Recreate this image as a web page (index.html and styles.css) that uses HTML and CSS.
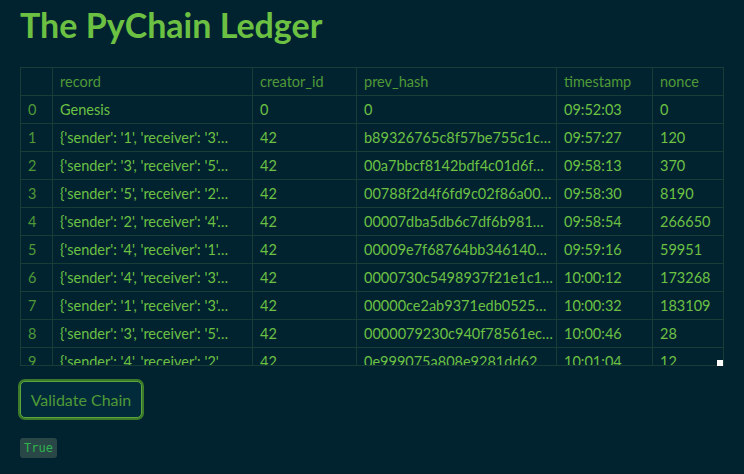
FILE: index.html
```
<!DOCTYPE html>
<html>
<head>
<meta charset="utf-8">
<link rel="stylesheet" href="styles.css">
</head>
<body>
<main class="main">
  <h1 class="title">The PyChain Ledger</h1>
  <div class="frame">
    <div class="scroller">
      <table class="grid">
        <colgroup>
          <col class="c-idx"><col class="c-rec"><col class="c-cre"><col class="c-hash"><col class="c-ts"><col class="c-non">
        </colgroup>
        <thead>
          <tr><th></th><th>record</th><th>creator_id</th><th>prev_hash</th><th>timestamp</th><th>nonce</th></tr>
        </thead>
        <tbody>
          <tr><td class="idx">0</td><td>Genesis</td><td>0</td><td>0</td><td>09:52:03</td><td>0</td></tr>
          <tr><td class="idx">1</td><td>{'sender': '1', 'receiver': '3'…</td><td>42</td><td>b89326765c8f57be755c1c…</td><td>09:57:27</td><td>120</td></tr>
          <tr><td class="idx">2</td><td>{'sender': '3', 'receiver': '5'…</td><td>42</td><td>00a7bbcf8142bdf4c01d6f…</td><td>09:58:13</td><td>370</td></tr>
          <tr><td class="idx">3</td><td>{'sender': '5', 'receiver': '2'…</td><td>42</td><td>00788f2d4f6fd9c02f86a00…</td><td>09:58:30</td><td>8190</td></tr>
          <tr><td class="idx">4</td><td>{'sender': '2', 'receiver': '4'…</td><td>42</td><td>00007dba5db6c7df6b981…</td><td>09:58:54</td><td>266650</td></tr>
          <tr><td class="idx">5</td><td>{'sender': '4', 'receiver': '1'…</td><td>42</td><td>00009e7f68764bb346140…</td><td>09:59:16</td><td>59951</td></tr>
          <tr><td class="idx">6</td><td>{'sender': '4', 'receiver': '3'…</td><td>42</td><td>0000730c5498937f21e1c1…</td><td>10:00:12</td><td>173268</td></tr>
          <tr><td class="idx">7</td><td>{'sender': '1', 'receiver': '3'…</td><td>42</td><td>00000ce2ab9371edb0525…</td><td>10:00:32</td><td>183109</td></tr>
          <tr><td class="idx">8</td><td>{'sender': '3', 'receiver': '5'…</td><td>42</td><td>0000079230c940f78561ec…</td><td>10:00:46</td><td>28</td></tr>
          <tr><td class="idx">9</td><td>{'sender': '4', 'receiver': '2'…</td><td>42</td><td>0e999075a808e9281dd62…</td><td>10:01:04</td><td>12</td></tr>
        </tbody>
      </table>
    </div>
    <span class="handle"></span>
  </div>
  <div class="actions">
    <button class="btn" type="button">Validate Chain</button>
  </div>
  <div class="result"><code class="badge">True</code></div>
</main>
</body>
</html>
```
FILE: styles.css
```
html, body {
  margin: 0;
  padding: 0;
  background: #012330;
}
body {
  font-family: "Lato", "Noto Sans", sans-serif;
  color: #6cc143;
  width: 744px;
  height: 474px;
  overflow: hidden;
}
.main {
  padding: 0 20px;
  display: flex;
  flex-direction: column;
  align-items: flex-start;
}
.title {
  margin: 6px 0 0 0;
  font-size: 34px;
  line-height: 38px;
  font-weight: 700;
  color: #6cc143;
  letter-spacing: 0;
}
.frame {
  position: relative;
  margin-top: 23px;
  width: 704px;
}
.scroller {
  height: 299px;
  overflow: hidden;
  border: 1px solid #183c36;
  box-sizing: border-box;
}
.grid {
  table-layout: fixed;
  border-collapse: collapse;
  width: 703px;
  margin: -1px 0 0 -1px;
  font-size: 14.5px;
}
.c-idx { width: 32px; }
.c-rec { width: 200px; }
.c-cre { width: 104px; }
.c-hash { width: 200px; }
.c-ts { width: 96px; }
.c-non { width: 72px; }
.grid th, .grid td {
  height: 27px;
  padding: 0 7px;
  border: 1px solid #183c36;
  text-align: left;
  white-space: nowrap;
  overflow: hidden;
  line-height: 27px;
  font-weight: 400;
}
.grid th {
  color: #4f9a37;
}
.grid td {
  color: #6cc143;
}
.grid td.idx {
  color: #4f9a37;
}
.handle {
  position: absolute;
  right: 1px;
  bottom: 0;
  width: 6px;
  height: 6px;
  background: #ffffff;
}
.actions {
  margin-top: 13px;
}
.btn {
  font-family: inherit;
  font-size: 16px;
  color: #4f9a37;
  background: #012b3a;
  border: 1px solid #5ba63a;
  border-radius: 5px;
  height: 37px;
  width: 122px;
  padding: 0;
  margin: 2px 0 0 0;
  box-shadow: 0 0 0 2px #3b7a2a;
  cursor: pointer;
}
.result {
  margin-top: 18px;
}
.badge {
  display: inline-block;
  font-family: "DejaVu Sans Mono", monospace;
  font-size: 12px;
  line-height: 20px;
  padding: 0 4px;
  color: #2fb34d;
  background: #2a4747;
  border-radius: 3px;
}
```
